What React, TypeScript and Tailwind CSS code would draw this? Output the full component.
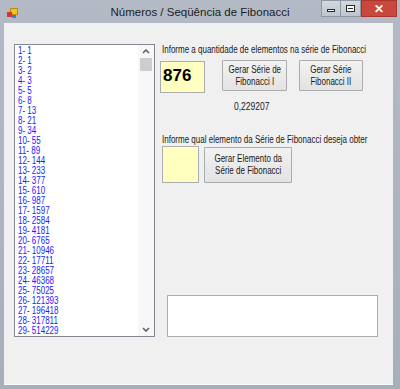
import React from "react";

const fib: string[] = (() => {
  const out: string[] = [];
  let a = 1;
  let b = 1;
  for (let i = 1; i <= 29; i++) {
    out.push(`${i}- ${a}`);
    const c = a + b;
    a = b;
    b = c;
  }
  return out;
})();

// MS Sans Serif look: Arial metrics squeezed horizontally
function WinButton({ children, className }: { children: React.ReactNode; className: string }) {
  return (
    <div
      className={`flex items-center justify-center text-center border border-[#acacac] bg-gradient-to-b from-[#f2f2f2] to-[#e3e3e3] text-[10px] leading-[12px] text-[#1a1a1a] whitespace-nowrap rounded-[1px] ${className}`}
    >
      <div className="scale-x-[0.8]">{children}</div>
    </div>
  );
}

export default function App() {
  return (
    <div
      className="w-[400px] h-[389px] flex flex-col bg-gradient-to-b from-[#b3bac5] to-[#a7afbb] overflow-hidden"
      style={{ fontFamily: '"Liberation Sans", Arial, sans-serif' }}
    >
      {/* title bar */}
      <div className="h-[23px] flex items-start shrink-0 relative">
        <div className="ml-[7px] mt-[8px] w-[11px] h-[10px] relative">
          <div className="absolute left-[3px] top-0 w-[8px] h-[7px] bg-[#f3c21f] border border-[#c08a10]" />
          <div className="absolute left-0 top-[4px] w-[5px] h-[5px] bg-[#d9332b]" />
          <div className="absolute left-[5px] top-[7px] w-[4px] h-[3px] bg-[#3a7bd5]" />
        </div>
        <div className="absolute left-0 right-0 top-[4px] text-center text-[11.5px] leading-[16px] text-[#1c1c1c] pointer-events-none">
          Números / Seqüência de Fibonacci
        </div>
        <div className="flex-1" />
        <div className="flex items-start mr-[3px] h-[17px]">
          <div className="w-[20px] h-[17px] border border-[#8f97a3] bg-gradient-to-b from-[#d4d9e0] to-[#bfc5ce] flex items-center justify-center">
            <div className="w-[8px] h-[3px] border border-[#2b2b2b] bg-white mt-[3px]" />
          </div>
          <div className="w-[20px] h-[17px] border border-l-0 border-[#8f97a3] bg-gradient-to-b from-[#d4d9e0] to-[#bfc5ce] flex items-center justify-center">
            <div className="w-[9px] h-[7px] border border-[#2b2b2b] bg-white flex items-center justify-center">
              <div className="w-[5px] h-[1px] bg-[#2b2b2b]" />
            </div>
          </div>
          <div className="w-[36px] h-[17px] bg-[#c9473d] border border-[#a8362e] flex items-center justify-center text-white text-[12px] font-bold leading-none">
            ✕
          </div>
        </div>
      </div>

      {/* client area */}
      <div className="flex-1 ml-[4px] mr-[7px] bg-[#f0f0f0] flex items-start pt-[21px] pl-[10px]">
        {/* list box */}
        <div className="w-[141px] h-[293px] border border-[#828790] bg-white flex shrink-0">
          <div className="flex-1 pl-[3px] pt-[1px] text-[10px] leading-[10px] text-[#1a1aff] overflow-hidden">
            <div className="origin-left scale-x-[0.8]">
              {fib.map((t) => (
                <div key={t} className="h-[10px] whitespace-nowrap">
                  {t}
                </div>
              ))}
            </div>
          </div>
          <div className="w-[16px] bg-[#f7f7f7] flex flex-col items-center">
            <div className="h-[13px] w-full flex items-center justify-center">
              <svg width="8" height="5" viewBox="0 0 8 5">
                <path d="M1 4 L4 1 L7 4" stroke="#606060" strokeWidth="1.6" fill="none" />
              </svg>
            </div>
            <div className="w-[12px] h-[13px] bg-[#cdcdcd]" />
            <div className="flex-1" />
            <div className="h-[13px] w-full flex items-center justify-center">
              <svg width="8" height="5" viewBox="0 0 8 5">
                <path d="M1 1 L4 4 L7 1" stroke="#606060" strokeWidth="1.6" fill="none" />
              </svg>
            </div>
          </div>
        </div>

        {/* right column */}
        <div className="ml-[5px] flex flex-col text-[10px] text-[#1a1a1a]">
          <div className="ml-[2px] mt-[-1px] h-[13px] leading-[13px] whitespace-nowrap origin-left scale-x-[0.8]">
            Informe a quantidade de elementos na série de Fibonacci
          </div>
          <div className="flex items-start mt-[5px]">
            <div className="w-[45px] h-[32px] bg-[#ffffc0] border border-[#abadb3] pl-[2px] pt-[4px] text-[17px] font-bold leading-[20px] text-black">
              876
            </div>
            <WinButton className="ml-[17px] mt-[-1px] w-[65px] h-[31px]">
              Gerar Série de
              <br />
              Fibonacci I
            </WinButton>
            <WinButton className="ml-[12px] mt-[-1px] w-[64px] h-[31px]">
              Gerar Série
              <br />
              Fibonacci II
            </WinButton>
          </div>
          <div className="ml-[74px] mt-[7px] h-[13px] leading-[13px] origin-left scale-x-[0.85]">0,229207</div>
          <div className="ml-[2px] mt-[20px] h-[13px] leading-[13px] whitespace-nowrap origin-left scale-x-[0.8]">
            Informe qual elemento da Série de Fibonacci deseja obter
          </div>
          <div className="flex items-start">
            <div className="ml-[2px] w-[37px] h-[37px] bg-[#ffffc0] border border-[#abadb3]" />
            <WinButton className="ml-[5px] mt-[1px] w-[88px] h-[36px]">
              Gerar Elemento da
              <br />
              Série de Fibonacci
            </WinButton>
          </div>
          <div className="ml-[7px] mt-[112px] w-[211px] h-[42px] bg-white border border-[#abadb3]" />
        </div>
      </div>
      <div className="h-[5px] shrink-0 border-t border-white ml-[4px] mr-[7px]" />
    </div>
  );
}
